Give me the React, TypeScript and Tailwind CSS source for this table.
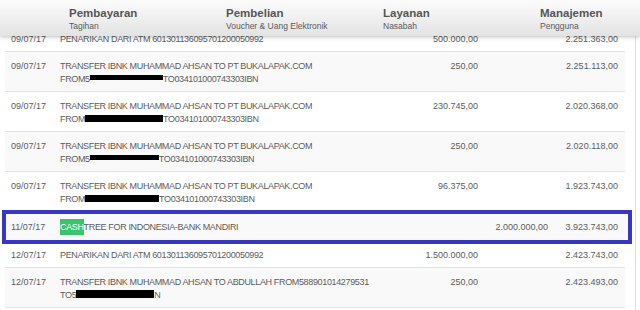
import React from "react";

type Tx = {
  date: string;
  lines: React.ReactNode[];
  debit?: string;
  credit?: string;
  balance: string;
};

const Blk = ({ className }: { className: string }) => (
  <span className={`inline-block bg-black ${className}`} />
);

const menu = [
  { title: "Pembayaran", sub: "Tagihan" },
  { title: "Pembelian", sub: "Voucher & Uang Elektronik" },
  { title: "Layanan", sub: "Nasabah" },
  { title: "Manajemen", sub: "Pengguna" },
];

const txs: Tx[] = [
  {
    date: "09/07/17",
    lines: ["PENARIKAN DARI ATM 601301136095701200050992"],
    debit: "500.000,00",
    balance: "2.251.363,00",
  },
  {
    date: "09/07/17",
    lines: [
      "TRANSFER IBNK MUHAMMAD AHSAN TO PT BUKALAPAK.COM",
      <>
        FROM5
        <Blk className="w-[73px] h-[5px] align-[2px]" />
        TO034101000743303IBN
      </>,
    ],
    debit: "250,00",
    balance: "2.251.113,00",
  },
  {
    date: "09/07/17",
    lines: [
      "TRANSFER IBNK MUHAMMAD AHSAN TO PT BUKALAPAK.COM",
      <>
        FROM
        <Blk className="w-[78px] h-[7px] align-baseline" />
        TO034101000743303IBN
      </>,
    ],
    debit: "230.745,00",
    balance: "2.020.368,00",
  },
  {
    date: "09/07/17",
    lines: [
      "TRANSFER IBNK MUHAMMAD AHSAN TO PT BUKALAPAK.COM",
      <>
        FROM5
        <Blk className="w-[69px] h-[5px] align-[2px]" />
        TO034101000743303IBN
      </>,
    ],
    debit: "250,00",
    balance: "2.020.118,00",
  },
  {
    date: "09/07/17",
    lines: [
      "TRANSFER IBNK MUHAMMAD AHSAN TO PT BUKALAPAK.COM",
      <>
        FROM
        <Blk className="w-[74px] h-[7px] align-baseline" />
        TO034101000743303IBN
      </>,
    ],
    debit: "96.375,00",
    balance: "1.923.743,00",
  },
];

const after: Tx[] = [
  {
    date: "12/07/17",
    lines: ["PENARIKAN DARI ATM 601301136095701200050992"],
    debit: "1.500.000,00",
    balance: "2.423.743,00",
  },
  {
    date: "12/07/17",
    lines: [
      "TRANSFER IBNK MUHAMMAD AHSAN TO ABDULLAH FROM588901014279531",
      <>
        TO5
        <Blk className="w-[78px] h-[8px] align-baseline" />
        N
      </>,
    ],
    debit: "250,00",
    balance: "2.423.493,00",
  },
];

function Cells({ tx }: { tx: Tx }) {
  return (
    <>
      <div>{tx.date}</div>
      <div className="tracking-[-0.35px]">
        {tx.lines.map((l, i) => (
          <div key={i} className="whitespace-nowrap">
            {l}
          </div>
        ))}
      </div>
      <div className="text-right">{tx.debit}</div>
      <div className="text-right">{tx.credit}</div>
      <div className="text-right">{tx.balance}</div>
    </>
  );
}

function Row({ tx, shaded, first }: { tx: Tx; shaded: boolean; first?: boolean }) {
  const twoLine = tx.lines.length > 1;
  const pt = first ? "pt-[6px]" : twoLine ? "pt-[8px]" : "pt-[7px]";
  return (
    <div
      className={`grid grid-cols-[49px_1fr_80px_70px_70px] pl-[6px] pr-[7px] pb-[5px] border-b border-[#e3e3e3] ${pt} ${
        shaded ? "bg-[#f9f9f9]" : "bg-white"
      }`}
    >
      <Cells tx={tx} />
    </div>
  );
}

export default function App() {
  return (
    <div className="relative w-[640px] h-[310px] overflow-hidden bg-white font-['Liberation_Sans',Arial,sans-serif] text-[9px] leading-[13px] text-[#5c5c5c]">
      {/* top menu, overlaps the scrolled table */}
      <div className="absolute top-0 left-0 z-20 w-full h-[36px] bg-linear-to-b from-[#fcfcfc] to-[#e3e3e3] shadow-[0_1px_4px_rgba(0,0,0,0.25)]">
        <div className="flex pl-[69px] pt-[6px]">
          {menu.map((m) => (
            <div key={m.title} className="w-[157px] shrink-0">
              <div className="text-[11.5px] leading-[14px] font-bold text-[#555]">
                {m.title}
              </div>
              <div className="text-[8.5px] leading-[10px] mt-[1px] text-[#5a5a5a]">
                {m.sub}
              </div>
            </div>
          ))}
        </div>
      </div>

      <div className="pt-[27px] w-[636px] h-full border-r border-[#dedede]">
        <div className="pl-[5px] pr-[10px]">
          {txs.map((tx, i) => (
            <Row key={i} tx={tx} shaded={i % 2 === 1} first={i === 0} />
          ))}

          <div className="relative z-10 -my-[2px] ml-[-3px] mr-[-7px] border-4 border-[#3737c4] bg-[#f9f9f9]">
            <div className="grid grid-cols-[49px_1fr_80px_70px_70px] pl-[5px] pr-[10px] pt-[7px] pb-[6px]">
              <div>11/07/17</div>
              <div className="tracking-[-0.35px] whitespace-nowrap">
                <span className="bg-[#3cc46a] text-white py-[3px]">CASH</span>
                TREE FOR INDONESIA-BANK MANDIRI
              </div>
              <div />
              <div className="text-right">2.000.000,00</div>
              <div className="text-right">3.923.743,00</div>
            </div>
          </div>

          {after.map((tx, i) => (
            <Row key={i} tx={tx} shaded={i % 2 === 1} />
          ))}
        </div>
      </div>
    </div>
  );
}
